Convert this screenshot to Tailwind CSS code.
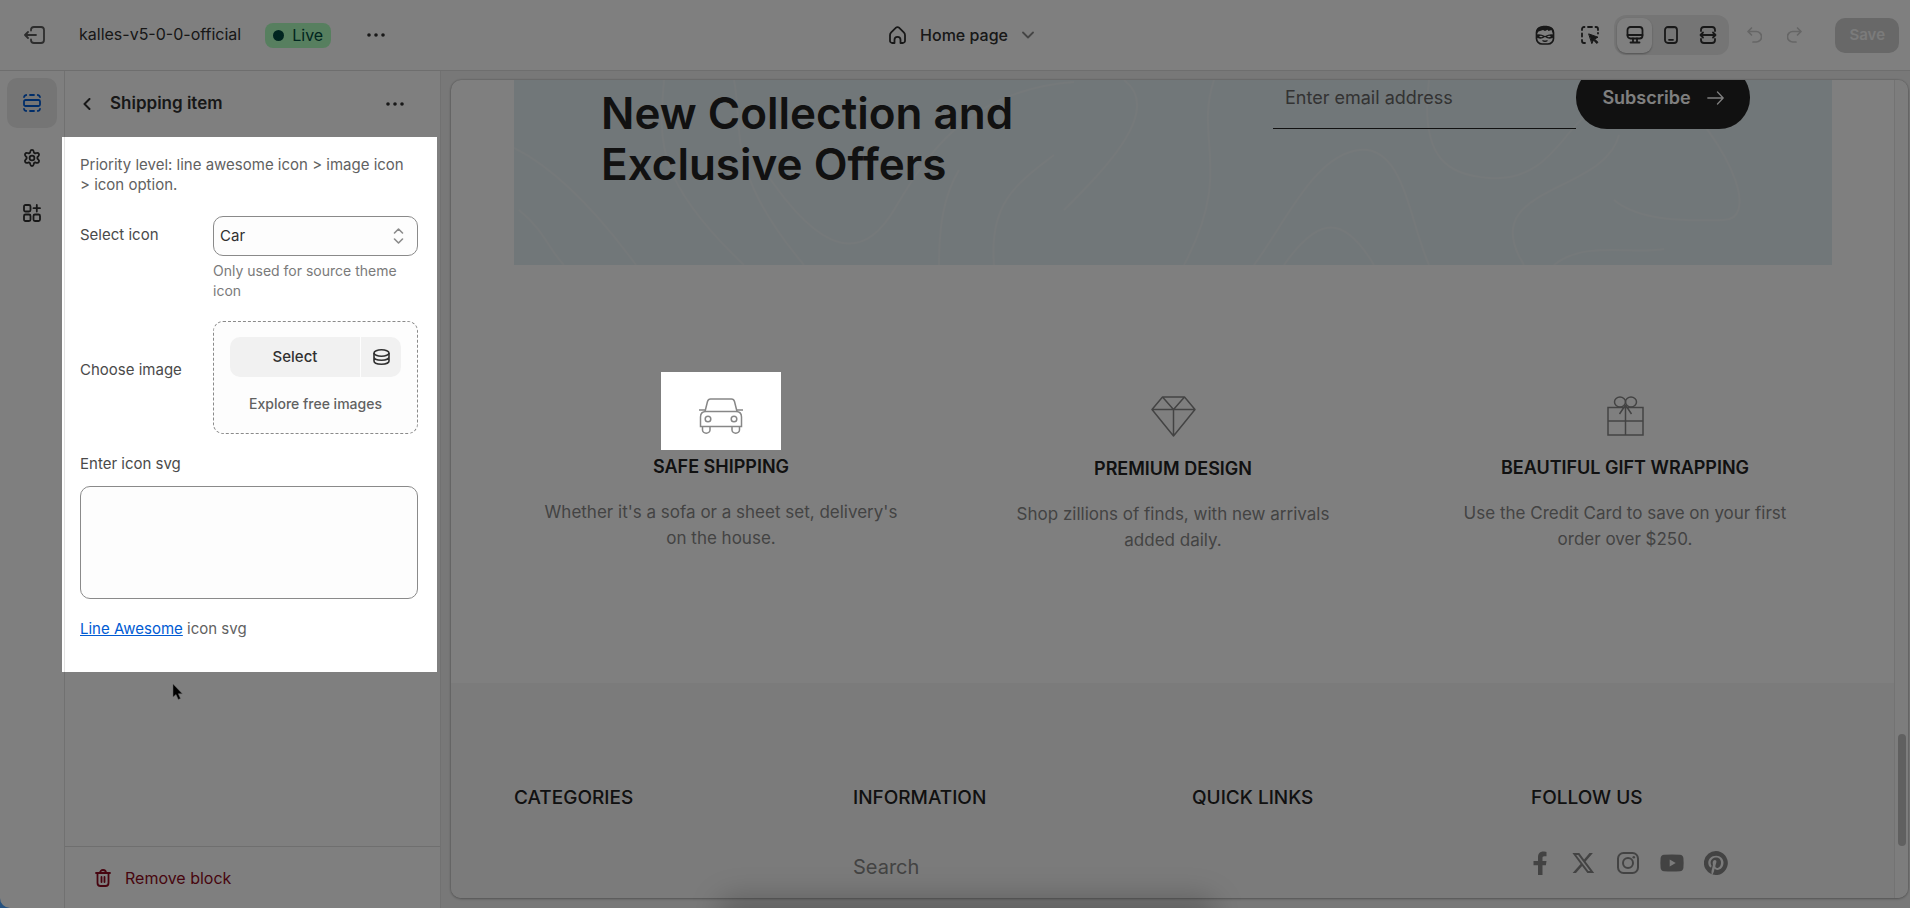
<!DOCTYPE html>
<html lang="en">
<head>
    <meta charset="UTF-8">
    <meta name="viewport" content="width=device-width, initial-scale=1.0">
    <title>kalles-v5-0-0-official - Home page</title>
    <script src="https://cdn.jsdelivr.net/npm/@tailwindcss/browser@4"></script>
</head>
<body class="relative flex h-screen flex-col overflow-hidden bg-[#4aa3ff] font-[Inter,sans-serif] text-base text-[#303030]">

    <!-- Top bar -->
    <header class="flex h-[71px] shrink-0 items-center border-b border-[#dcdcdc] bg-white pr-[11px] pl-6">
        <div class="flex flex-1 items-center">
            <button aria-label="Exit" class="text-[#5a5a5a]">
                <svg class="h-[18px] w-[21px]" viewBox="0 0 21 18" fill="none" stroke="currentColor" stroke-width="1.8" stroke-linecap="round" stroke-linejoin="round"><path d="M7 4.5V4a3 3 0 0 1 3-3h7a3 3 0 0 1 3 3v10a3 3 0 0 1-3 3h-7a3 3 0 0 1-3-3v-.5M12 9H1.200M4 6 1 9l3 3"/></svg>
            </button>
            <span class="ml-[34px] pb-0.5">kalles-v5-0-0-official</span>
            <span class="ml-6 flex h-[25px] items-center gap-2 rounded-lg bg-[#affebf] px-2 text-base text-[#014b40]">
                <span class="size-[11px] rounded-full bg-[#014b40]"></span>Live
            </span>
            <button aria-label="Theme actions" class="ml-9">
                <svg class="h-1 w-[18px]" viewBox="0 0 18 4" fill="currentColor"><circle cx="2" cy="2" r="1.800"/><circle cx="9" cy="2" r="1.800"/><circle cx="16" cy="2" r="1.800"/></svg>
            </button>
        </div>

        <button class="flex items-center gap-[14px] font-medium">
            <svg class="h-[18px] w-[17px]" viewBox="0 0 17 18" fill="none" stroke="currentColor" stroke-width="1.800" stroke-linejoin="round"><path d="M1 9.200c0-1.100.4-2 1.200-2.800l4.800-4.700a2.100 2.100 0 0 1 3 0l4.800 4.700c.8.8 1.200 1.700 1.200 2.800V14.500A2.300 2.300 0 0 1 13.700 17h-2.200v-3.200a3 3 0 0 0-6 0V17H3.300A2.300 2.300 0 0 1 1 14.500z"/></svg>
            Home page
            <svg class="h-2 w-3" viewBox="0 0 12 8" fill="none" stroke="#8a8a8a" stroke-width="1.800" stroke-linecap="round" stroke-linejoin="round"><path d="m1 1.500 5 5 5-5"/></svg>
        </button>

        <div class="flex flex-1 items-center justify-end">
            <button aria-label="Sidekick">
                <svg class="size-5" viewBox="0 0 20 20" fill="none" stroke="currentColor" stroke-width="1.700"><rect x="1.500" y="2" width="17" height="17" rx="5.500"/><path d="M1.500 9V6.500C2 3 5 .800 10 .800S18 3 18.500 6.500V9c-1-1.500-1.500-2.500-2-4l-3 1-1-1.200L10 6 8 5 3.500 6.500z" fill="currentColor" stroke="none"/><path d="M1.500 9.500q4-1 8.500 1.500 4.500-2.500 8.500-1.500v3q-4 2.500-8.500-.5-4.500 3-8.500.5z" fill="currentColor" stroke="none"/><path d="M4 11.400q2-1.600 4 .2-2 1.300-4-.2M12 11.600q2-1.800 4-.2-2 1.500-4 .2" fill="#fff" stroke="none"/><path d="M7.500 15.500q2.500 1.500 5 0" stroke-width="1.400"/></svg>
            </button>
            <button aria-label="Inspector" class="ml-[26px]">
                <svg class="size-[18px]" viewBox="0 0 18 18" fill="none" stroke="currentColor" stroke-width="1.800" stroke-linecap="round"><path d="M1 4V3a2 2 0 0 1 2-2h.5M7 1h4M14.500 1h.5a2 2 0 0 1 2 2v1M1 7.500v3M1 14v1a2 2 0 0 0 2 2h1M17 7v.5"/><path d="m8 8 9 3.200-3.500 1.800 3.500 3.300-1.200 1.200-3.300-3.500L11 17.300z" fill="currentColor" stroke-width="1" stroke-linejoin="round"/></svg>
            </button>
            <div class="ml-[15px] flex h-10 items-center rounded-xl bg-[#ebebeb] px-[3px]">
                <button aria-label="Desktop" class="grid h-[35px] w-[35px] place-items-center rounded-[9px] bg-white shadow-[0_1px_2px_rgba(0,0,0,.3)]">
                    <svg class="size-[18px]" viewBox="0 0 18 18" fill="none" stroke="currentColor" stroke-width="1.800" stroke-linecap="round"><rect x="1.500" y="1" width="15" height="11.500" rx="3"/><path d="M1.500 9h15M7 12.500v3.500M11 12.500v3.500M4.500 16.500h9"/></svg>
                </button>
                <button aria-label="Mobile" class="grid h-[35px] w-[37px] place-items-center">
                    <svg class="h-[18px] w-[14px]" viewBox="0 0 14 18" fill="none" stroke="currentColor" stroke-width="1.800" stroke-linecap="round"><rect x="1" y="1" width="12" height="16" rx="3"/><path d="M5 13.800h4"/><path d="M4 1h6v1.200H4z" fill="currentColor" stroke="none"/></svg>
                </button>
                <button aria-label="Fullscreen" class="grid h-[35px] w-[37px] place-items-center">
                    <svg class="size-[18px]" viewBox="0 0 18 18" fill="none" stroke="currentColor" stroke-width="1.800" stroke-linecap="round" stroke-linejoin="round"><path d="M2 5V4a3 3 0 0 1 3-3h8a3 3 0 0 1 3 3v1M2 13v1a3 3 0 0 0 3 3h8a3 3 0 0 0 3-3v-1M2 9h14M4 6.500 1.500 9 4 11.500M14 6.500 16.500 9 14 11.500"/></svg>
                </button>
            </div>
            <button aria-label="Undo" disabled class="ml-[18px] text-[#cccccc]">
                <svg class="h-4 w-[15px]" viewBox="0 0 15 16" fill="none" stroke="currentColor" stroke-width="1.700" stroke-linecap="round" stroke-linejoin="round"><path d="M4.500 1 1 4.500 4.500 8M1 4.500h8.300a4.700 4.700 0 0 1 0 10.500H6"/></svg>
            </button>
            <button aria-label="Redo" disabled class="ml-[25px] text-[#cccccc]">
                <svg class="h-4 w-[15px]" viewBox="0 0 15 16" fill="none" stroke="currentColor" stroke-width="1.700" stroke-linecap="round" stroke-linejoin="round"><path d="M10.500 1 14 4.500 10.500 8M14 4.500H5.700a4.700 4.700 0 0 0 0 10.500H9"/></svg>
            </button>
            <button disabled class="ml-[33px] h-[35px] rounded-[10px] bg-[#d0d0d0] px-[14px] text-[15px] font-semibold text-[#f6f6f6]">Save</button>
        </div>
    </header>

    <main class="flex min-h-0 flex-1">
        <!-- Icon rail -->
        <nav class="flex w-[65px] shrink-0 flex-col gap-[5px] rounded-bl-[10px] border-r border-[#e3e3e3] bg-white px-[7px] pt-[7px]">
            <button aria-label="Sections" class="grid size-[50px] place-items-center rounded-[10px] bg-[#ebebeb] text-[#005bd3]">
                <svg class="size-[18px]" viewBox="0 0 18 18" fill="none" stroke="currentColor" stroke-width="1.800" stroke-linecap="round"><rect x="1" y="6" width="16" height="6" rx="1.500"/><path d="M1 3.200A2.500 2.500 0 0 1 3.200 1M7 1h4M14.800 1A2.500 2.500 0 0 1 17 3.200M1 14.800A2.500 2.500 0 0 0 3.200 17M7 17h4M14.800 17a2.500 2.500 0 0 0 2.200-2.200"/></svg>
            </button>
            <button aria-label="Theme settings" class="grid size-[50px] place-items-center">
                <svg class="h-5 w-[18px]" viewBox="0 0 18 20" fill="none" stroke="currentColor" stroke-width="1.800" stroke-linejoin="round"><path d="M7.300 2.600C7.500 1.600 8 1 9 1s1.500.6 1.700 1.600l.3 1.300 1.200.7 1.300-.4c1-.3 1.800 0 2.300.8.500.9.300 1.700-.4 2.400l-1 1v1.400l1 1c.7.700.9 1.600.4 2.400-.5.900-1.300 1.100-2.300.8l-1.300-.4-1.200.7-.3 1.300c-.2 1-.7 1.600-1.700 1.600s-1.500-.6-1.700-1.600L7 14.300l-1.200-.7-1.300.4c-1 .3-1.800.1-2.300-.8-.5-.8-.3-1.700.4-2.400l1-1V8.400l-1-1c-.7-.7-.9-1.500-.4-2.400.5-.8 1.300-1.100 2.300-.8l1.300.4L7 3.900z" transform="translate(0 .8)"/><circle cx="9" cy="10" r="2.400"/></svg>
            </button>
            <button aria-label="App embeds" class="grid size-[50px] place-items-center">
                <svg class="size-[18px]" viewBox="0 0 18 18" fill="none" stroke="currentColor" stroke-width="1.800" stroke-linecap="round"><rect x="1" y="1" width="6.500" height="6.500" rx="1.500"/><rect x="1" y="10.500" width="6.500" height="6.500" rx="1.500"/><rect x="10.500" y="10.500" width="6.500" height="6.500" rx="1.500"/><path d="M13.800 1v6.500M10.500 4.200H17"/></svg>
            </button>
        </nav>

        <!-- Block settings -->
        <aside class="flex w-[375px] shrink-0 flex-col bg-white">
            <div class="flex h-[66px] shrink-0 items-center px-[18px]">
                <button aria-label="Back" class="w-[27px]">
                    <svg class="h-3 w-2" viewBox="0 0 8 12" fill="none" stroke="currentColor" stroke-width="2" stroke-linecap="round" stroke-linejoin="round"><path d="M6.500 1 1.500 6l5 5"/></svg>
                </button>
                <h2 class="flex-1 text-[17px] font-semibold">Shipping item</h2>
                <button aria-label="Block actions" class="mr-[18px]">
                    <svg class="h-1 w-[18px]" viewBox="0 0 18 4" fill="currentColor"><circle cx="2" cy="2" r="1.800"/><circle cx="9" cy="2" r="1.800"/><circle cx="16" cy="2" r="1.800"/></svg>
                </button>
            </div>

            <form class="relative z-20 mr-[3px] -ml-[3px] bg-white pl-0.5 text-[15px] leading-5 text-[#4a4a4a]">
                <div class="border-l border-[#e3e3e3] pt-[18px] pr-[19px] pb-[33px] pl-[15px]">
                    <p class="pr-2 text-[#616161]">Priority level: line awesome icon &gt; image icon &gt; icon option.</p>

                    <div class="mt-[21px] grid grid-cols-[133px_1fr]">
                        <label for="icon" class="pt-[9px]">Select icon</label>
                        <div>
                            <div class="relative">
                                <select id="icon" class="h-10 w-full appearance-none rounded-[10px] border border-[#8a8a8a] bg-[#fdfdfd] px-[6px] text-[#303030]">
                                    <option>Car</option>
                                </select>
                                <svg class="pointer-events-none absolute top-3 right-[14px] h-4 w-[11px]" viewBox="0 0 11 16" fill="none" stroke="#8a8a8a" stroke-width="1.600" stroke-linecap="round" stroke-linejoin="round"><path d="m1.500 5 4-4 4 4M1.500 11l4 4 4-4"/></svg>
                            </div>
                            <p class="mt-[5px] text-[14px] text-[#7a7a7a]">Only used for source theme icon</p>
                        </div>
                    </div>

                    <div class="mt-5 grid grid-cols-[133px_1fr] items-center">
                        <span class="pb-4">Choose image</span>
                        <div class="flex h-[113px] flex-col rounded-[10px] border border-dashed border-[#8a8a8a] bg-[#fdfdfd] px-4 pt-[15px] text-center">
                            <div class="flex h-10 gap-px text-[#303030]">
                                <button type="button" class="flex-1 rounded-l-[10px] bg-[#f1f1f1] font-medium">Select</button>
                                <button type="button" aria-label="Dynamic source" class="grid w-10 place-items-center rounded-r-[10px] bg-[#f1f1f1]">
                                    <svg class="h-4 w-[17px]" viewBox="0 0 17 16" fill="none" stroke="currentColor" stroke-width="1.600"><ellipse cx="8.500" cy="4" rx="7.500" ry="3.200"/><path d="M1 4v8c0 1.800 3.200 3.200 7.500 3.200S16 13.800 16 12V4M1 8c0 1.800 3.200 3.200 7.500 3.200S16 9.800 16 8"/></svg>
                                </button>
                            </div>
                            <button type="button" class="mt-[17px] text-[14px] font-medium text-[#616161]">Explore free images</button>
                        </div>
                    </div>

                    <label for="svg" class="mt-5 block">Enter icon svg</label>
                    <textarea id="svg" class="mt-3 block h-[113px] w-full resize-none rounded-[10px] border border-[#8a8a8a] bg-[#fdfdfd] p-2"></textarea>

                    <p class="mt-5 text-[#616161]"><a href="#" class="text-[#005bd3] underline">Line Awesome</a> icon svg</p>
                </div>
            </form>

            <div class="mt-auto flex h-[62px] items-center border-t border-[#dedede] pl-[30px]">
                <button class="flex items-center gap-[14px] text-[#8e0b21]">
                    <svg class="h-[18px] w-4" viewBox="0 0 16 18" fill="none" stroke="currentColor" stroke-width="1.800" stroke-linecap="round" stroke-linejoin="round"><path d="M1 4h14M5 4a3 3 0 0 1 6 0M2.500 4v10a3 3 0 0 0 3 3h5a3 3 0 0 0 3-3V4M6.500 8v5M9.500 8v5"/></svg>
                    Remove block
                </button>
            </div>
        </aside>

        <!-- Storefront preview -->
        <section class="min-w-0 flex-1 border-l border-[#e3e3e3] bg-[#f1f1f1] pt-[9px] pr-0.5 pb-[10px] pl-[10px]">
            <div class="flex h-full overflow-hidden rounded-[10px] bg-white shadow-[0_0_2px_rgba(0,0,0,.3),0_1px_3px_rgba(0,0,0,.25)]">
                <div class="min-w-0 flex-1 text-[#222]">
                    <div class="relative mr-[62px] ml-[63px] -mt-[60px] flex h-[245px] items-start justify-between overflow-hidden bg-[#e3eef2] pt-[46px] pr-[82px] pl-[87px]">
                        <svg class="absolute inset-0 h-full w-full" viewBox="0 0 1318 245" preserveAspectRatio="none" fill="none" stroke="#eaf2f5" stroke-width="2"><path d="M0 128c40 20 80 60 122 117M5 190c25 20 30 40 45 55M150 60c-5 60-10 100 80 185M220 60c10 50-10 90 70 185M250 150c60 90 100 90 130 40S450 70 560 62M425 245c0-40 5-70 20-95M480 245c-5-60 20-80 60-110M610 60c40 30-20 90-60 130M700 60c-20 60 20 90-30 185M740 245c30-40 60-110 105-115s50 70 70 115M770 245c35-50 60-50 90 0M915 60c-10 80 20 95 60 98s60-20 80-45 60-50 80-53M1010 245c-50-80 80-70 95-130M1040 245c30-25 80-10 110-16M1100 180c30 25 90 20 110 20 30 0 20-60-60-140"/></svg>
                        <h2 class="relative mt-[22px] w-[480px] text-[44px] leading-[51px] font-semibold">New Collection and Exclusive Offers</h2>
                        <form class="relative flex">
                            <input type="email" aria-label="Email" placeholder="Enter email address" class="h-[63px] w-[303px] border-b border-[#222] px-3 text-[18px] outline-none placeholder:text-[#666]">
                            <button type="button" class="flex h-[63px] w-[174px] items-center justify-center gap-4 rounded-[31px] bg-[#222] text-[18px] font-semibold text-white">Subscribe
                                <svg class="h-[14px] w-[17px]" viewBox="0 0 17 14" fill="none" stroke="currentColor" stroke-width="1.300" stroke-linecap="round" stroke-linejoin="round"><path d="M.8 7h15.400M10.500 1 16.200 7l-5.700 6"/></svg>
                            </button>
                        </form>
                    </div>

                    <div class="mr-[62px] ml-[63px] grid grid-cols-3 items-start gap-[38px] pt-[107px] text-center text-[17px] leading-[26px] text-[#878787]">
                        <div class="flex flex-col items-center">
                            <div class="relative z-20 grid h-[78px] w-[120px] place-items-center bg-white pt-[9px]">
                                <svg class="h-[36px] w-[46px]" viewBox="0 0 46 36" fill="none" stroke="#878787" stroke-width="1.500"><path d="M1 12h6M39 12h6M7 13.500 9.500 3.500Q10.200 1 12.500 1h21q2.300 0 3 2.500L39 13.500"/><path d="M8 13.500h30q5.500 0 5.500 5.500v9.500h-41V19q0-5.500 5.500-5.500z"/><circle cx="10" cy="21" r="2.800"/><circle cx="36" cy="21" r="2.800"/><path d="M4.500 28.500V32a3.500 3 0 0 0 7.500 0v-3.500M34 28.500V32a3.500 3 0 0 0 7.500 0v-3.500"/></svg>
                            </div>
                            <h3 class="mt-1 text-[18px] font-semibold text-[#222]">SAFE SHIPPING</h3>
                            <p class="mt-[19px] w-[360px]">Whether it's a sofa or a sheet set, delivery's on the house.</p>
                        </div>
                        <div class="flex flex-col items-center pt-6">
                            <svg class="h-[41px] w-[45px]" viewBox="0 0 45 41" fill="none" stroke="#878787" stroke-width="1.500" stroke-linejoin="round"><path d="M11.500 1h22L44 13.500 22.500 40 1 13.500zM1 13.500h43M11.500 1l11 12.500 11-12.500M22.500 13.500V40"/></svg>
                            <h3 class="mt-[19px] text-[18px] font-semibold text-[#222]">PREMIUM DESIGN</h3>
                            <p class="mt-[19px] w-[340px]">Shop zillions of finds, with new arrivals added daily.</p>
                        </div>
                        <div class="flex flex-col items-center pt-6">
                            <svg class="h-10 w-[37px]" viewBox="0 0 37 40" fill="none" stroke="#878787" stroke-width="1.500"><path d="M1 11.500h35V39H1zM1 25h35M18.500 9v30M18.500 9l-6 9M18.500 9l6 9"/><ellipse cx="13" cy="6" rx="5.500" ry="5"/><ellipse cx="24" cy="6" rx="5.500" ry="5"/></svg>
                            <h3 class="mt-[19px] text-[18px] font-semibold text-[#222]">BEAUTIFUL GIFT WRAPPING</h3>
                            <p class="mt-[19px] w-[350px]">Use the Credit Card to save on your first order over $250.</p>
                        </div>
                    </div>

                    <footer class="mt-[130px] grid h-[300px] grid-cols-4 gap-[38px] bg-[#f6f6f6] pt-[101px] pr-[62px] pl-[63px] text-[20px] leading-7">
                        <h4 class="text-[19px] font-medium">CATEGORIES</h4>
                        <div>
                            <h4 class="text-[19px] font-medium">INFORMATION</h4>
                            <a href="#" class="mt-[41px] block text-[#878787]">Search</a>
                        </div>
                        <h4 class="text-[19px] font-medium">QUICK LINKS</h4>
                        <div>
                            <h4 class="text-[19px] font-medium">FOLLOW US</h4>
                            <div class="-ml-[3px] mt-[39px] flex gap-5 text-[#878787]">
                                <a href="#" aria-label="Facebook"><svg class="size-6" viewBox="0 0 24 24" fill="currentColor"><path d="M18.500 1v4.200h-2.300c-1.300 0-1.700.7-1.700 1.800v3h4l-.6 4.200h-3.400V24H10v-9.800H5.500V10H10V6.300C10 2.700 12 .6 15.300.6c1.400 0 2.600.2 3.200.4z"/></svg></a>
                                <a href="#" aria-label="X"><svg class="size-6" viewBox="0 0 24 24" fill="currentColor"><path d="M17.500 2h3.400l-7.300 8.500L22.200 22h-6.800l-5.300-7-6.100 7H.600l8-9.100L.400 2h6.900l4.800 6.400zm-1.200 18h1.900L6.200 3.900h-2z"/></svg></a>
                                <a href="#" aria-label="Instagram"><svg class="size-6" viewBox="0 0 24 24" fill="none" stroke="currentColor" stroke-width="2"><rect x="2" y="2" width="20" height="20" rx="5.500"/><circle cx="12" cy="12" r="5"/><circle cx="17.800" cy="6.200" r="1.300" fill="currentColor" stroke="none"/></svg></a>
                                <a href="#" aria-label="YouTube"><svg class="size-6" viewBox="0 0 24 24" fill="currentColor"><path fill-rule="evenodd" d="M4 3.800Q12 3.200 20 3.800q3 .3 3.400 3.200.5 5 0 10-.4 2.900-3.400 3.200-8 .6-16 0-3-.3-3.400-3.200-.5-5 0-10Q1 4.100 4 3.800zM9.700 8.600v6.800l6-3.400z"/></svg></a>
                                <a href="#" aria-label="Pinterest"><svg class="size-6" viewBox="0 0 24 24" fill="currentColor"><path d="M12 0a12 12 0 0 0-4.400 23.200c-.1-.9-.2-2.400 0-3.400l1.400-6s-.3-.7-.3-1.800c0-1.700 1-2.900 2.200-2.900 1 0 1.500.8 1.500 1.700 0 1-.7 2.600-1 4-.3 1.200.6 2.200 1.800 2.200 2.100 0 3.800-2.300 3.800-5.500 0-2.900-2.100-4.900-5-4.900-3.400 0-5.400 2.600-5.400 5.200 0 1 .4 2.100.9 2.700v.4l-.4 1.400c0 .2-.2.300-.4.200-1.500-.7-2.400-2.900-2.400-4.600 0-3.800 2.700-7.200 7.900-7.200 4.100 0 7.300 2.900 7.300 6.900 0 4.100-2.600 7.400-6.200 7.400-1.200 0-2.300-.6-2.700-1.400l-.7 2.800c-.3 1-1 2.300-1.500 3.100A12 12 0 1 0 12 0z"/></svg></a>
                            </div>
                        </div>
                    </footer>
                </div>
                <!-- Scrollbar -->
                <div class="flex w-[14px] shrink-0 flex-col justify-end border-l border-[#e6e6e6] bg-[#fafafa] px-[3px] pb-[52px]">
                    <div class="h-28 w-2 rounded-full bg-[#c1c1c1]"></div>
                </div>
            </div>
        </section>
    </main>

    <!-- Soft shadow behind the bottom edge -->
    <div class="pointer-events-none absolute inset-x-0 bottom-0 z-10 flex h-12 justify-center overflow-hidden pl-6">
        <div class="mt-9 h-10 w-[500px] shrink-0 rounded-full bg-black/20 blur-[14px]"></div>
    </div>

    <!-- Dimmed backdrop, highlighted parts sit above it -->
    <div class="pointer-events-none absolute inset-0 z-10 bg-black/50"></div>
    <svg class="pointer-events-none absolute top-[683px] left-[172px] z-30 h-[18px] w-3" viewBox="0 0 12 18"><path d="M1 1v13l3-2.500 2.300 5 2.200-1-2.200-4.800h4z" fill="#000" stroke="#666" stroke-width=".5"/></svg>
</body>
</html>
